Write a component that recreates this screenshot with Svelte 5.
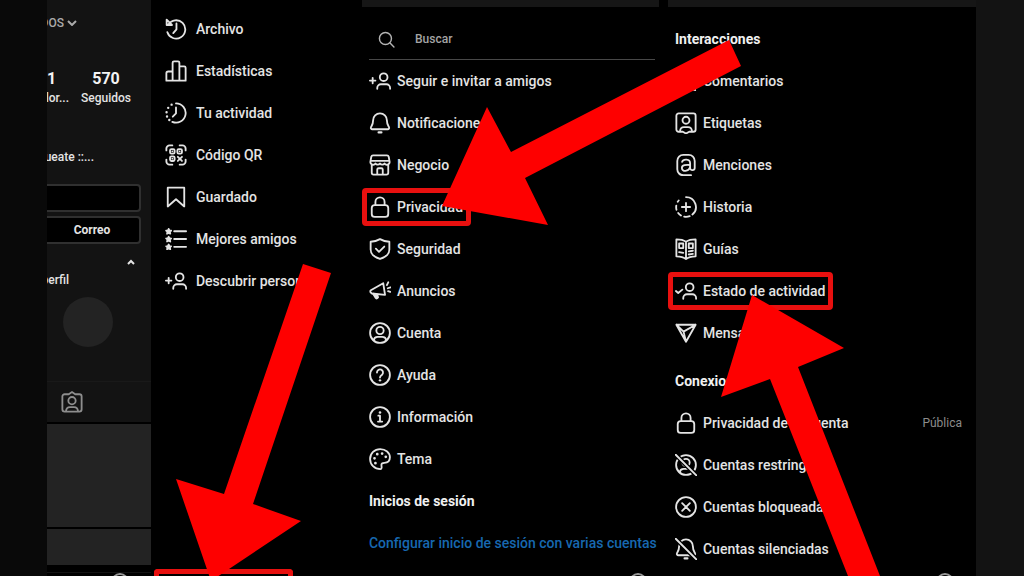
<script>
  const icons = {
    archive: '<path d="M3.600 7.200A10 10 0 1 1 2.600 15.500M1.800 1.800v5.800h5.800z"/><path d="M12.500 6v6.500l-3.500 4"/>',
    stats: '<path d="M8.300 22.500V3a1.500 1.500 0 0 1 1.500-1.500h4.400a1.500 1.500 0 0 1 1.500 1.500v19.500M8.300 12.500H3.500a2 2 0 0 0-2 2v8h21v-14a1.500 1.500 0 0 0-1.500-1.500h-5.300"/>',
    activity: '<path d="M12 1.500a10.500 10.500 0 1 1-4 20.200"/><path d="M12 6v6.500L8.500 16"/><path stroke-width="2.600" d="M7.200 2.900h.01M3.500 6.400h.01M1.700 11.200h.01M2.200 15.800h.01M4.700 19.600h.01"/>',
    qr: '<path d="M1.500 7V5a3.500 3.500 0 0 1 3.500-3.500h3M16 1.500h3A3.500 3.500 0 0 1 22.500 5v2M22.500 17v2a3.500 3.500 0 0 1-3.500 3.500h-3M8 22.500H5A3.500 3.500 0 0 1 1.500 19v-2"/><rect x="5.500" y="5.500" width="5" height="5" rx="1.500"/><rect x="13.500" y="5.500" width="5" height="5" rx="1.500"/><rect x="5.500" y="13.500" width="5" height="5" rx="1.500"/><path d="M14 14l4.500 4.500M18.500 14L14 18.500M8 8h.01M16 8h.01M8 16h.01"/>',
    bookmark: '<path d="M21 22.300 12 14.400l-9 7.900V1.800h18z"/>',
    friends: '<path d="M10 3.500h13M10 12h13M10 20.500h13"/><g fill="currentColor" stroke-width="1.800"><path d="m4 .9.9 1.700 1.900.3-1.400 1.400.4 2L4 5.400l-1.800.9.4-2L1.200 2.900l1.900-.3z"/><path d="m4 9.400.9 1.700 1.900.3-1.400 1.400.4 2L4 13.900l-1.800.9.4-2-1.400-1.400 1.900-.3z"/><path d="m4 17.900.9 1.700 1.900.3-1.400 1.400.4 2-1.800-.9-1.800.9.4-2-1.400-1.400 1.900-.3z"/></g>',
    addUser: '<circle cx="16" cy="7.800" r="4.200"/><path d="M9 20.500v-1a4 4 0 0 1 4-4h6a4 4 0 0 1 4 4v1M1 11.500h6M4 8.500v6"/>',
    bell: '<path d="M12 1.500a7.500 7.500 0 0 0-7.500 7.600c0 4.200-1.300 5.700-2.300 7.400-.6 1 .1 2.300 1.300 2.300h17c1.200 0 1.900-1.300 1.300-2.300-1-1.700-2.300-3.200-2.300-7.400A7.500 7.500 0 0 0 12 1.500z"/><path stroke-width="2.500" d="M10.500 22.300h3"/>',
    shop: '<path d="M3 11.500v9a2 2 0 0 0 2 2h14a2 2 0 0 0 2-2v-9M9 22.500V17a1.500 1.500 0 0 1 1.500-1.500h3A1.500 1.500 0 0 1 15 17v5.500"/><path d="M4.500 1.500h15a2 2 0 0 1 2 1.500l1 5.500a3 3 0 0 1-5.500 1.800 3 3 0 0 1-5 0 3 3 0 0 1-5 0A3 3 0 0 1 1.500 8.500l1-5.500a2 2 0 0 1 2-1.500zM3 7.500h18"/>',
    lock: '<rect x="3" y="10" width="18" height="12.800" rx="3.200"/><path d="M7 10V6.500a5 5 0 0 1 10 0V10"/>',
    shield: '<path d="M12 1.200c3 1.700 6.500 2.700 10.200 2.900v8.400c0 5-4.500 8.600-10.200 10.400-5.700-1.800-10.200-5.400-10.200-10.400V4.100C5.500 3.900 9 2.900 12 1.200z"/><path d="m7.500 11.700 3.400 3.400 5.800-5.800"/>',
    ads: '<path d="M15.500 3.500 2 11.200c-.8.500-.8 2 .2 2.700l1 .8 14.300 1.500z"/><path fill="currentColor" d="m4.500 15 2.700 4.500c.8 1.300 3.300.2 2.600-1.300l-1-2.400z"/><path d="M19.500 5.500l1.500-3M20.500 9l3-1M20.800 12.200l2.400.8"/>',
    account: '<circle cx="12" cy="12" r="10.800"/><circle cx="12" cy="9.300" r="4"/><path d="M5.200 19.800c.3-2.300 2-3.600 4.300-3.600h5c2.300 0 4 1.300 4.300 3.600"/>',
    help: '<circle cx="12" cy="12" r="10.800"/><path d="M8.700 9.300a3.300 3.300 0 1 1 5.500 2.400c-1.200 1-2.200 1.400-2.200 3"/><path stroke-width="2.600" d="M12 17.800h.01"/>',
    info: '<circle cx="12" cy="12" r="10.800"/><path d="M10.200 10.500H12v6.500M9.800 17h4.600"/><path stroke-width="2.800" d="M12 7h.01"/>',
    palette: '<path d="M12.500 23C6 23 1.200 18.200 1.200 12S6 1.200 12.200 1.200c6 0 10.600 3.800 10.600 9 0 4-2.500 6-6 6-2.300 0-3.600 1-3.200 3 .3 1.800.4 3.800-1.100 3.800z"/><path stroke-width="3" d="M7 16.500h.01M6 11.300h.01M9 6.800h.01M14.300 6h.01M18.300 9.600h.01"/>',
    comment: '<path d="M20.700 17a9.900 9.900 0 1 0-3.600 3.700L22 22z"/>',
    tag: '<path d="M4 1.500h16A2.500 2.500 0 0 1 22.500 4v15a2.500 2.500 0 0 1-2.500 2.500h-4.500L12 23.500l-3.500-2H4A2.500 2.500 0 0 1 1.500 19V4A2.500 2.500 0 0 1 4 1.500z"/><circle cx="12" cy="9" r="3.800"/><path d="M5.500 21c.2-2.800 1.800-4.500 4.300-4.500h4.400c2.500 0 4.100 1.700 4.300 4.500"/>',
    mention: '<path d="M17.500 23.200H9a6.500 6.500 0 0 1-6.500-6.500V7.500A6.500 6.500 0 0 1 9 1h6a6.500 6.500 0 0 1 6.500 6.500v7.800c0 3-5 3.200-5 0V10c0-4.800-7.500-5-8.700-1.500"/><path d="M16.500 12c-4.500-.5-9 0-9 3.200 0 4.300 7.500 4.300 9-.7"/>',
    story: '<path d="M12 1.200a10.800 10.800 0 0 1 7 19M16 22a11 11 0 0 1-6 .6M6.500 21.300a11 11 0 0 1-3-2.800M1.600 15a11 11 0 0 1-.2-4.500M3 6.300a11 11 0 0 1 1-1.400M12 7.500v9M7.500 12h9"/>',
    guide: '<path d="M12 4C9 2 5.500 1.500 1.500 1.500V20c4 0 8 .8 10.500 3 2.500-2.200 6.500-3 10.500-3V1.500C18.500 1.500 15 2 12 4zM12 4v19"/><path d="M4.500 6h4.500v5H4.500zM15 6h4.500v5H15zM4.500 15.500l4.500.8M15 14.500l4.500-.6M15 18l4.500-.6"/>',
    online: '<circle cx="16" cy="7.800" r="4.200"/><path d="M9 20.500v-1a4 4 0 0 1 4-4h6a4 4 0 0 1 4 4v1M1 12l2.500 2.200L8 10.500"/>',
    send: '<path d="M1.500 3h21L12 21.500zM9.300 10.500 22.500 3M9.300 10.500 12 21.500M1.500 3l7.800 7.500"/>',
    restricted: '<circle cx="12" cy="12" r="10.800"/><circle cx="12" cy="9.300" r="4"/><path d="M5.200 19.800c.3-2.300 2-3.600 4.300-3.600h5"/><path stroke="#000" stroke-width="5" d="M3 3l19 19"/><path d="M.8.800l22.500 22.500"/>',
    blocked: '<circle cx="12" cy="12" r="10.800"/><path d="m7.800 7.800 8.400 8.400M16.200 7.800l-8.400 8.400"/>',
    muted: '<path d="M12 1.500a7.500 7.500 0 0 0-7.500 7.600c0 4.200-1.300 5.700-2.300 7.400-.6 1 .1 2.300 1.300 2.300h17c1.200 0 1.900-1.300 1.300-2.300-1-1.700-2.300-3.200-2.300-7.400A7.500 7.500 0 0 0 12 1.500z"/><path stroke-width="2.500" d="M10.500 22.300h3"/><path stroke="#000" stroke-width="5" d="M3 3l19 19"/><path d="M.8.800l22.500 22.500"/>',
    search: '<circle cx="10.500" cy="10.500" r="8.500"/><path d="m17 17 5.500 5.500"/>',
    photos: '<path d="M4 3.500h4.500L12 1.200l3.500 2.300H20A2.500 2.500 0 0 1 22.500 6v14a2.500 2.500 0 0 1-2.500 2.500H4A2.500 2.500 0 0 1 1.500 20V6A2.500 2.500 0 0 1 4 3.500z"/><circle cx="12" cy="10.500" r="4"/><path d="M5.500 22c.2-2.800 1.800-4.500 4.300-4.500h4.400c2.500 0 4.100 1.700 4.300 4.500"/>'
  };

  const menu = [
    ['archive', 'Archivo'],
    ['stats', 'Estadísticas'],
    ['activity', 'Tu actividad'],
    ['qr', 'Código QR'],
    ['bookmark', 'Guardado'],
    ['friends', 'Mejores amigos'],
    ['addUser', 'Descubrir personas']
  ];
  const settings = [
    ['addUser', 'Seguir e invitar a amigos'],
    ['bell', 'Notificaciones'],
    ['shop', 'Negocio'],
    ['lock', 'Privacidad', true],
    ['shield', 'Seguridad'],
    ['ads', 'Anuncios'],
    ['account', 'Cuenta'],
    ['help', 'Ayuda'],
    ['info', 'Información'],
    ['palette', 'Tema']
  ];
  const interactions = [
    ['comment', 'Comentarios'],
    ['tag', 'Etiquetas'],
    ['mention', 'Menciones'],
    ['story', 'Historia'],
    ['guide', 'Guías'],
    ['online', 'Estado de actividad', true],
    ['send', 'Mensajes']
  ];
  const connections = [
    ['lock', 'Privacidad de la cuenta', false, 'Pública'],
    ['restricted', 'Cuentas restringidas'],
    ['blocked', 'Cuentas bloqueadas'],
    ['muted', 'Cuentas silenciadas']
  ];
</script>

{#snippet icon(name)}
  <svg class="icon" viewBox="0 0 24 24" aria-hidden="true">{@html icons[name]}</svg>
{/snippet}

{#snippet rows(items)}
  <ul>
    {#each items as [glyph, label, marked, value]}
      <li>
        <button class="row" class:marked>
          {@render icon(glyph)}
          <span>{label}</span>
        </button>
        {#if value}<span class="value">{value}</span>{/if}
      </li>
    {/each}
  </ul>
{/snippet}

{#snippet tabs()}
  <div class="tabs"><span class="avatar"></span></div>
{/snippet}

<main class="board">
  <section class="profile">
    <button class="switcher">
      <span>DOS</span>
      <svg class="chevron" viewBox="0 0 10 6" aria-hidden="true"><path d="m1 1 4 4 4-4" /></svg>
    </button>
    <dl class="stats">
      <div><dd>1</dd><dt>dor...</dt></div>
      <div><dd>570</dd><dt>Seguidos</dt></div>
    </dl>
    <p class="bio"><span>ueate ::...</span></p>
    <div class="actions">
      <button aria-label="Editar"></button>
      <button>Correo</button>
    </div>
    <button class="collapse" aria-label="Contraer">
      <svg class="chevron" viewBox="0 0 10 6" aria-hidden="true"><path d="m2 5 3-3 3 3" /></svg>
    </button>
    <p class="hint"><span>perfil</span></p>
    <div class="bubble"></div>
    <div class="photo-tab">{@render icon('photos')}</div>
    <div class="tile"></div>
    <div class="tile last"></div>
    {@render tabs()}
  </section>

  <nav class="menu">
    {@render rows(menu)}
    <div class="target"></div>
  </nav>

  <section class="settings">
    <div class="strip"></div>
    <label class="search">
      {@render icon('search')}
      <input type="text" placeholder="Buscar" aria-label="Buscar" />
    </label>
    {@render rows(settings)}
    <h2>Inicios de sesión</h2>
    <a href="#sesion">Configurar inicio de sesión con varias cuentas</a>
    {@render tabs()}
  </section>

  <section class="privacy">
    <div class="strip"></div>
    <h2>Interacciones</h2>
    {@render rows(interactions)}
    <h2 class="second">Conexiones</h2>
    {@render rows(connections)}
    {@render tabs()}
  </section>

  <svg class="arrows" viewBox="0 0 1024 576" preserveAspectRatio="none" aria-hidden="true">
    <path d="M303 264 331 273 253 504 301 521 211 581 176 479 224 494Z" />
    <path d="M729 40 741 66 525 178 548 225 442 206 487 107 511 152Z" />
    <path d="M752 295 844 348 798 367 880 576 848 576 770 379 721 397Z" />
  </svg>
</main>

<style>
  :global(body) {
    margin: 0;
    background: #0b0b0b;
  }
  .board {
    position: relative;
    display: grid;
    grid-template-columns: 104fr 210fr 299fr 316fr;
    height: 100vh;
    min-height: 576px;
    box-sizing: border-box;
    padding: 0 4.6875% 0 4.5898%;
    overflow: hidden;
    background: linear-gradient(90deg, #090909 0 50%, #131313 50%);
    color: #e4e4e4;
    font: 500 14px/20px Roboto, sans-serif;
  }
  .board > section,
  .menu {
    display: flex;
    flex-direction: column;
    min-width: 0;
    overflow: hidden;
    background: #000;
  }
  ul, dl, dd, p, h2 {
    margin: 0;
    padding: 0;
  }
  ul {
    list-style: none;
  }
  li {
    display: flex;
    align-items: center;
    justify-content: space-between;
    height: 42px;
  }
  button {
    border: 0;
    padding: 0;
    background: none;
    color: inherit;
    font: inherit;
  }
  .row {
    position: relative;
    display: flex;
    align-items: center;
    gap: 6px;
    height: 42px;
    white-space: nowrap;
  }
  .marked::after {
    content: '';
    position: absolute;
    inset: 2px -8px 2px -7px;
    border: 5px solid #e8100f;
    border-radius: 4px;
  }
  .icon {
    flex: none;
    width: 22px;
    height: 22px;
    fill: none;
    stroke: currentColor;
    stroke-width: 2;
    stroke-linecap: round;
    stroke-linejoin: round;
  }
  h2 {
    font-size: 14px;
    font-weight: 700;
    line-height: 42px;
    color: #f0f0f0;
  }
  .strip {
    flex: none;
    height: 7px;
    background: #161616;
  }
  .tabs {
    display: flex;
    flex: none;
    justify-content: flex-end;
    height: 3px;
    margin-top: auto;
    padding-right: 8px;
    overflow: hidden;
  }
  .avatar {
    width: 14px;
    height: 14px;
    border: 2px solid #999;
    border-radius: 50%;
  }

  .board > .profile {
    background: #131313;
    font-size: 13px;
  }
  .switcher {
    display: flex;
    align-items: center;
    justify-content: flex-end;
    gap: 3px;
    width: 30px;
    height: 39px;
    padding-top: 6px;
    color: #aaa;
    font-size: 12px;
  }
  .chevron {
    flex: none;
    width: 10px;
    height: 6px;
    fill: none;
    stroke: currentColor;
    stroke-width: 2;
  }
  .stats {
    display: grid;
    grid-template-columns: 22px 1fr;
    gap: 12px;
    padding: 30px 20px 0 0;
  }
  .stats div {
    display: flex;
    flex-direction: column;
    align-items: center;
  }
  .stats div:first-child {
    align-items: flex-end;
  }
  .stats dd {
    color: #f4f4f4;
    font-size: 16px;
    font-weight: 700;
  }
  .stats div:first-child dd {
    align-self: flex-start;
  }
  .stats dt {
    line-height: 18px;
    font-size: 12px;
  }
  .bio,
  .hint {
    display: flex;
    justify-content: flex-end;
    font-size: 12px;
    white-space: nowrap;
  }
  .bio {
    width: 47px;
    margin-top: 40px;
  }
  .actions {
    display: flex;
    flex-direction: column;
    gap: 4px;
    margin: 17px 10px 0 -4px;
  }
  .actions button {
    height: 28px;
    border: 2px solid #303030;
    border-radius: 4px;
    background: #000;
    font-size: 12px;
    font-weight: 700;
  }
  .collapse {
    display: flex;
    align-self: flex-end;
    margin: 15px 15px 0 0;
  }
  .hint {
    width: 22px;
    margin-top: 5px;
  }
  .bubble {
    flex: none;
    width: 50px;
    height: 50px;
    margin: 7px 0 0 16px;
    border-radius: 50%;
    background: #232323;
  }
  .photo-tab {
    display: flex;
    align-items: center;
    height: 40px;
    margin-top: 34px;
    padding-left: 14px;
    border-top: 1px solid #191919;
    border-bottom: 2px solid #000;
    color: #8e8e8e;
  }
  .tile {
    flex: none;
    height: 103px;
    background: #232323;
    border-bottom: 2px solid #000;
  }
  .last {
    height: 36px;
    border-bottom: 7px solid #000;
  }
  .profile .tabs {
    padding-right: 22px;
    background: #000;
  }

  .menu {
    padding: 8px 0 0 14px;
  }
  .menu .row {
    gap: 9px;
  }
  .target {
    flex: none;
    width: 129px;
    height: 2px;
    margin: auto 0 0 -11px;
    border: 5px solid #e8100f;
    border-bottom: 0;
    border-radius: 4px 4px 0 0;
  }

  .settings {
    padding: 0 5px 0 8px;
  }
  .settings .strip {
    margin: 0 -4px 0 -7px;
  }
  .search {
    display: flex;
    align-items: center;
    gap: 20px;
    height: 53px;
    padding: 12px 0 0 9px;
    box-sizing: border-box;
    border-bottom: 1px solid #484848;
    color: #b4b4b4;
  }
  .search .icon {
    width: 17px;
    height: 17px;
  }
  .search input {
    flex: 1;
    min-width: 0;
    padding: 0;
    border: 0;
    outline: 0;
    background: none;
    color: inherit;
    font: 500 12px/20px Roboto, sans-serif;
  }
  .search input::placeholder {
    color: #a4a4a4;
    opacity: 1;
  }
  .settings a {
    color: #1768b0;
    line-height: 42px;
    text-decoration: none;
    white-space: nowrap;
  }

  .privacy {
    padding: 0 14px 0 15px;
  }
  .privacy .strip {
    margin: 0 -14px 0 -7px;
  }
  .privacy h2 {
    padding-top: 11px;
  }
  .privacy .second {
    padding-top: 6px;
  }
  .value {
    color: #8c8c8c;
    font-size: 12px;
    font-weight: 400;
  }

  .arrows {
    position: absolute;
    inset: 0;
    width: 100%;
    height: 100%;
    fill: #fe0000;
    pointer-events: none;
  }
</style>
